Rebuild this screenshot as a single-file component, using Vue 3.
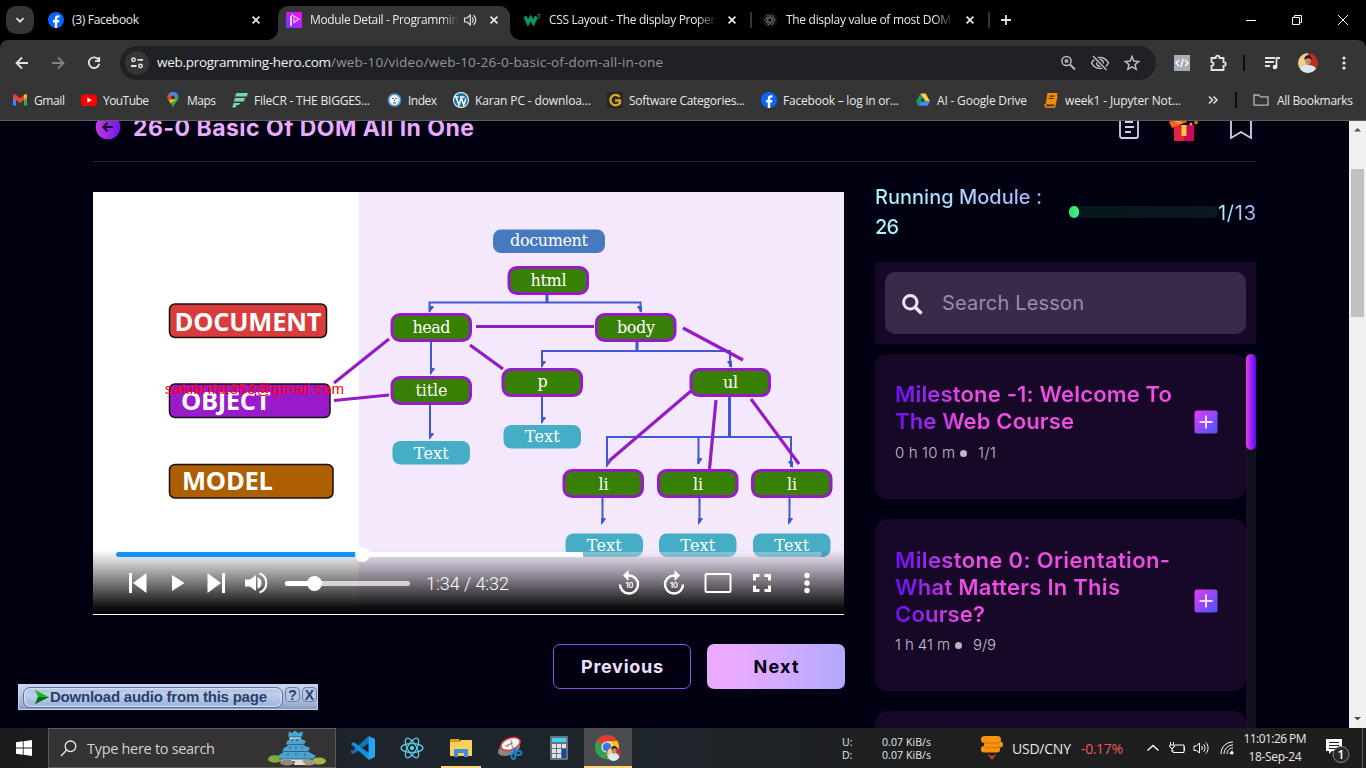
<script setup>
// Sets letter spacing so that a label occupies an exact advance width.
const vFit = {
  mounted(el, { value }) {
    const n = Math.max(1, el.textContent.length - 1)
    const natural = el.getBoundingClientRect().width
    el.style.letterSpacing = (value - natural) / n + 'px'
    el.style.width = value + 'px'
  }
}

const tabs = [
  { icon: 'fb', title: '(3) Facebook', w: 67 },
  { icon: 'ph', title: 'Module Detail - Programming', w: 155, active: true, audio: true },
  { icon: 'w3', title: 'CSS Layout - The display Property', w: 176, sep: true },
  { icon: 'gpt', title: 'The display value of most DOM el', w: 177, sep: true }
]

const marks = [
  { icon: 'gmail', label: 'Gmail', w: 31 },
  { icon: 'yt', label: 'YouTube', w: 46 },
  { icon: 'maps', label: 'Maps', w: 29 },
  { icon: 'filecr', label: 'FileCR - THE BIGGES...', w: 116 },
  { icon: 'index', label: 'Index', w: 29 },
  { icon: 'wp', label: 'Karan PC - downloa...', w: 116 },
  { icon: 'g', label: 'Software Categories...', w: 116 },
  { icon: 'fb', label: 'Facebook – log in or...', w: 116 },
  { icon: 'drive', label: 'AI - Google Drive', w: 90 },
  { icon: 'jup', label: 'week1 - Jupyter Not...', w: 116 }
]

const boxes = [
  { x: 169.5, y: 304, w: 157, fill: '#d93c3c', t: 'DOCUMENT', tx: 174.5, tw: 147, ty: 330.5 },
  { x: 169.5, y: 384, w: 160.5, fill: '#991bc9', t: 'OBJECT', tx: 181, tw: 89.5, ty: 409.5 },
  { x: 169.5, y: 464.5, w: 163.5, fill: '#ad5f00', t: 'MODEL', tx: 182, tw: 91, ty: 489.5 }
]
const elements = [
  { t: 'html', x: 507.5, y: 266, b: 286, w: 36 },
  { t: 'head', x: 390.5, y: 313, b: 333, w: 38 },
  { t: 'body', x: 595, y: 313, b: 333, w: 38 },
  { t: 'title', x: 390.5, y: 376, b: 396, w: 32 },
  { t: 'p', x: 501.5, y: 368, b: 387, w: 10 },
  { t: 'ul', x: 689.5, y: 368, b: 388, w: 15 },
  { t: 'li', x: 562.5, y: 469, b: 490, w: 10 },
  { t: 'li', x: 657, y: 469, b: 490, w: 10 },
  { t: 'li', x: 751, y: 469, b: 490, w: 10 }
]
const leaves = [
  { x: 392.5, y: 441, b: 458.5 },
  { x: 503.5, y: 425, b: 441.5 },
  { x: 565.5, y: 533.5, b: 551 },
  { x: 659, y: 533.5, b: 551 },
  { x: 753, y: 533.5, b: 551 }
]
// Arrow tips: x, y and the side on which the barb sits.
const tips = [
  [430, 313, 1], [641, 313, -1], [431, 375, 1], [430, 440, 1], [542, 368, 1], [731, 368, -1], [542, 424, 1],
  [607, 468, 1], [698.5, 465, 1], [792, 468, -1], [602, 525, 1], [699, 525, 1], [789, 525, 1]
]
const strokes = [
  [334, 383, 389, 339], [334, 400.5, 389, 395], [476, 326.5, 594, 326.5], [470, 345, 503, 369],
  [683, 328, 743, 360], [691, 391, 609, 461], [716, 400, 709.5, 469], [751, 399, 799, 464]
]

const lessons = [
  { lines: [['Milestone -1: Welcome To', 277], ['The Web Course', 179]], time: '0 h 10 m', tw: 60, count: '1/1', cw: 18 },
  { lines: [['Milestone 0: Orientation-', 275], ['What Matters In This', 225], ['Course?', 90]], time: '1 h 41 m', tw: 55, count: '9/9', cw: 23 }
]
</script>

<template>
  <div class="screen">
    <!-- tab strip -->
    <div class="strip">
      <div class="tabsearch"><svg width="10" height="10" viewBox="0 0 10 10"><path d="M1.5 3.2 5 6.7 8.5 3.2" class="ln w2" /></svg></div>
      <template v-for="t in tabs" :key="t.title">
        <div class="tab" :class="{ active: t.active }">
          <svg v-if="t.icon === 'fb'" width="16" height="16" viewBox="0 0 16 16"><circle cx="8" cy="8" r="8" fill="#0866ff" /><path d="M6.800 16V10.400H5V8h1.800V6.700c0-2.300 1.100-3.500 3.300-3.500.5 0 1 .1 1.400.2v2.100h-1c-1 0-1.300.5-1.300 1.200V8h2.200l-.4 2.400H9.200V16z" fill="#fff" /></svg>
          <svg v-else-if="t.icon === 'ph'" width="16" height="16" viewBox="0 0 16 16"><defs><linearGradient id="phg" x1="1" y1="0" x2="0" y2="1"><stop offset="0" stop-color="#ff05e8" /><stop offset="1" stop-color="#6a3dff" /></linearGradient></defs><rect width="16" height="16" fill="url(#phg)" /><path d="M5 4v10" stroke="#f9d8ff" stroke-width="1.800" /><path d="M5 2.500 13 7l-5 3.500V6" stroke="#eba8ff" stroke-width="1.500" fill="none" /></svg>
          <svg v-else-if="t.icon === 'w3'" width="17" height="16" viewBox="0 0 17 16"><path d="M1 4.500 4 11 6.700 6 9.500 11l2.800-6.500" stroke="#059862" stroke-width="3.400" fill="none" /><path d="M13.500 2.500H16L14.500 4.500c2 0 2 2.500-.8 2.200" stroke="#0a8f60" stroke-width="1" fill="none" /></svg>
          <svg v-else width="16" height="16" viewBox="0 0 16 16"><circle cx="8" cy="8" r="7.500" fill="#131313" /><g fill="none" stroke="#777" stroke-width="1.100" stroke-dasharray="1.300 .8"><ellipse cx="8" cy="8" rx="5" ry="2.200" /><ellipse cx="8" cy="8" rx="5" ry="2.200" transform="rotate(60 8 8)" /><ellipse cx="8" cy="8" rx="5" ry="2.200" transform="rotate(120 8 8)" /></g></svg>
          <div class="tabtext" :class="{ fade: t.w > 100, short: t.audio }"><span v-fit="t.w">{{ t.title }}</span></div>
          <svg v-if="t.audio" class="aud" width="14" height="14" viewBox="0 0 14 14"><path d="M1.500 5H4l3.300-3v10L4 9H1.500z" class="ln" /><path d="M9 4.500c1.600 1.200 1.600 3.800 0 5M10.400 2.200c3.200 2.200 3.200 7.400 0 9.600" class="ln" /></svg>
          <svg class="close" width="16" height="16" viewBox="0 0 16 16"><path d="m4.600 4.600 6.800 6.800m0-6.800-6.800 6.800" class="ln w2" /></svg>
        </div>
        <i v-if="t.sep" class="tabsep"></i>
      </template>
      <svg class="plus" width="12" height="12" viewBox="0 0 12 12"><path d="M6 1v10M1 6h10" class="ln w2" /></svg>
      <div class="win">
        <svg width="12" height="12" viewBox="0 0 12 12"><path d="M1 6.500h10" class="ln thin" /></svg>
        <svg width="12" height="12" viewBox="0 0 12 12"><path d="M1.500 3.500h7v7h-7zM3.500 3.500v-2h7v7h-2" class="ln thin" /></svg>
        <svg width="12" height="12" viewBox="0 0 12 12"><path d="m1 1 10 10m0-10L1 11" class="ln thin" /></svg>
      </div>
    </div>

    <!-- toolbar -->
    <div class="toolbar">
      <svg width="16" height="16" viewBox="0 0 16 16"><path d="M14 8H3M8 2.500 2.500 8 8 13.500" class="ln w2" /></svg>
      <svg class="dim" width="16" height="16" viewBox="0 0 16 16"><path d="M2 8h11M8 2.500 13.500 8 8 13.500" class="ln w2" /></svg>
      <svg width="16" height="16" viewBox="0 0 16 16"><path d="M12.700 5A5.300 5.300 0 1 0 13.300 8.800M13.200 2v4.200H9" class="ln w2" /></svg>
      <div class="omni">
        <div class="tune"><svg width="14" height="14" viewBox="0 0 14 14"><circle cx="3.500" cy="3.800" r="1.700" class="ln w15" /><path d="M7.500 3.800H13M1 10h5.500" class="ln w2" /><circle cx="10.500" cy="10" r="1.700" class="ln w15" /></svg></div>
        <span v-fit="174" class="host">web.programming-hero.com</span><span v-fit="332" class="path">/web-10/video/web-10-26-0-basic-of-dom-all-in-one</span>
        <div class="omniicons">
          <svg width="16" height="16" viewBox="0 0 16 16"><circle cx="6.500" cy="6" r="4.600" class="ln w15" /><circle cx="6.500" cy="6" r="2" fill="#c7c7c7" /><path d="m10 9.500 5 5" class="ln w2" /></svg>
          <svg width="20" height="16" viewBox="0 0 20 16"><path d="M1.500 8C4 3.500 7 2.500 10 2.500S16 3.500 18.500 8C16 12.500 13 13.500 10 13.500S4 12.500 1.500 8z" class="ln w15" /><circle cx="10" cy="8" r="3.200" class="ln w15" /><path d="m3.500 1 13 14" stroke="#202124" stroke-width="4" /><path d="m3 1 13.500 14" class="ln w15" /></svg>
          <svg width="16" height="16" viewBox="0 0 16 16"><path d="m8 1.600 1.800 4.500 4.900.4-3.700 3.100 1.200 4.700L8 11.800l-4.200 2.500L5 9.600 1.300 6.500l4.900-.4z" class="ln w15" /></svg>
        </div>
      </div>
      <svg class="ext" width="16" height="16" viewBox="0 0 16 16"><rect width="16" height="16" fill="#a6adba" /><path d="M5 5 2 8l3 3M11 5l3 3-3 3M9.200 4 6.800 12" stroke="#fff" stroke-width="1.300" fill="none" /></svg>
      <svg class="puz" width="18" height="18" viewBox="0 0 18 18"><path d="M2.500 4h4.200c0-3.200 3.800-3.200 3.800 0h4v4.200c3 0 3 3.600 0 3.600V16h-12v-4.200c2.800 0 2.800-3.600 0-3.600z" class="ln w2" /></svg>
      <i class="bar"></i>
      <svg class="music" width="17" height="14" viewBox="0 0 17 14"><path d="M1 2h10M1 6h9M1 10h5M12.500 11V2H16" class="ln w2" /><circle cx="11" cy="11" r="2.300" fill="#eee" /></svg>
      <svg class="ava" width="20" height="20" viewBox="0 0 20 20"><clipPath id="avc"><circle cx="10" cy="10" r="10" /></clipPath><g clip-path="url(#avc)"><path fill="#f2cf8d" d="M0 0h10v20H0z" /><path fill="#c02a20" d="M10 0h10v20H10z" /><path d="M2 20c0-6 3-8 8-8s9 2 9 8z" fill="#d5eaf0" /><ellipse cx="10" cy="7.500" rx="2.800" ry="4.200" fill="#c18b6b" /><path d="M6.500 7c-1-6.500 8-6.500 7 0-2-2.500-4.500-2.500-7 0z" fill="#251a18" /></g></svg>
      <svg class="dots" width="4" height="16" viewBox="0 0 4 16"><g fill="#eee"><circle cx="2" cy="3" r="1.600" /><circle cx="2" cy="8" r="1.600" /><circle cx="2" cy="13" r="1.600" /></g></svg>
    </div>

    <!-- bookmarks -->
    <div class="marks">
      <div v-for="m in marks" :key="m.label" class="mark">
        <svg width="16" height="16" viewBox="0 0 16 16">
          <g v-if="m.icon === 'gmail'"><path d="M1 3.500V13.500h3V6z" fill="#4285f4" /><path d="M15 3.500V13.500h-3V6z" fill="#34a853" /><path d="M1 3.500C1 2 3 2 4 3l4 3.200L12 3c1-1 3-1 3 .5v2.200L8 11 1 5.700z" fill="#ea4335" /><path d="M12 3c1-1 3-1 3 .5v2.200l-3 2.200z" fill="#fbbc04" /></g>
          <g v-else-if="m.icon === 'yt'"><rect y="2.500" width="16" height="11.500" rx="3" fill="#f00" /><path d="m6.400 5.600 4.400 2.600-4.400 2.600z" fill="#fff" /></g>
          <g v-else-if="m.icon === 'maps'"><path d="M8 0a5.500 5.500 0 0 0-5.500 5.500C2.500 9 7 11 8 16c1-5 5.500-7 5.500-10.500A5.500 5.500 0 0 0 8 0z" fill="#34a853" /><path d="M8 0a5.500 5.500 0 0 1 5 3.200L7 10 2.500 5.500A5.500 5.500 0 0 1 8 0z" fill="#4285f4" /><path d="M4 2 8 5 4 9C2 6.500 2 4 4 2z" fill="#ea4335" /><path d="m4 9 4-4 3 3-5.500 3z" fill="#fbbc04" /><circle cx="8" cy="5.500" r="2" fill="#3a3a3a" /></g>
          <g v-else-if="m.icon === 'filecr'" fill="#72d8b0"><path d="M4.500 1H16l-1.200 3.500H3z" /><path d="M3 6h10l-1.200 3.500H1.700z" /><path d="M1.700 11H8l-1 2H4.500L3.800 15.500H.2z" /></g>
          <g v-else-if="m.icon === 'index'"><circle cx="8.500" cy="8" r="7" fill="#3a83b4" /><circle cx="8.500" cy="8" r="5.600" fill="#b9dcf0" /><ellipse cx="8.500" cy="8" rx="3.800" ry="4.800" fill="#fff" /><path d="M6 6.500h1.800M9.300 6.500h1.700M8.500 7.500v2M7 11h3" stroke="#555" /></g>
          <g v-else-if="m.icon === 'wp'"><circle cx="8" cy="8" r="8" fill="#fff" /><circle cx="8" cy="8" r="7" fill="#1d769b" /><path d="M1.500 5h4M7 5h4.500M3 5l3 8 2.300-7M8 5l2.700 8L13 6.500" stroke="#fff" stroke-width="1.500" fill="none" /></g>
          <g v-else-if="m.icon === 'g'"><rect width="16" height="16" fill="#292522" /><path d="M12.800 5A5.200 5.200 0 1 0 13 10.800V8.500H8" stroke="#d9a823" stroke-width="2.400" fill="none" /></g>
          <g v-else-if="m.icon === 'fb'"><circle cx="8" cy="8" r="8" fill="#0866ff" /><path d="M6.800 16V10.400H5V8h1.800V6.700c0-2.300 1.100-3.500 3.300-3.500.5 0 1 .1 1.400.2v2.100h-1c-1 0-1.300.5-1.300 1.200V8h2.200l-.4 2.400H9.200V16z" fill="#fff" /></g>
          <g v-else-if="m.icon === 'drive'"><path d="M5.500 1.500 1 9.500l2.300 4.200L8 5.500z" fill="#16a05d" /><path d="M5.500 1.500h5L15 9.500h-4.600z" fill="#ffcf48" /><path d="M5.700 9.500H15l-2.400 4.200H3.300z" fill="#4688f4" /></g>
          <g v-else><path d="M4.500 1H14.500l-2.400 11.500H2.500z" fill="#f58a07" /><path d="M2 12c0 3 1 3 2 3h7.500l2.400-11" stroke="#f58a07" stroke-width="1.500" fill="none" /><path d="M6.200 4.200h5M5.700 6.500h5" stroke="#3b3220" stroke-width="1.200" /></g>
        </svg>
        <span v-fit="m.w">{{ m.label }}</span>
      </div>
      <svg class="more" width="10" height="10" viewBox="0 0 10 10"><path d="m1 1.500 3.500 3.500L1 8.500M5.500 1.500 9 5 5.500 8.500" class="ln w15" /></svg>
      <i class="bar"></i>
      <svg class="folder" width="16" height="12" viewBox="0 0 16 12"><path d="M1 1h5l1.500 1.800H15V11.200H1z" stroke="#b5b5b5" stroke-width="1.300" fill="none" /></svg>
      <span v-fit="76">All Bookmarks</span>
    </div>

    <!-- page -->
    <div class="page">
      <div class="content">
        <div class="head">
          <svg width="26" height="26" viewBox="0 0 26 26"><defs><linearGradient id="bkg"><stop offset="0" stop-color="#c23bdf" /><stop offset="1" stop-color="#7115ec" /></linearGradient></defs><circle cx="13" cy="13" r="12.300" fill="url(#bkg)" /><path d="M18 13H8.500M12.500 8.800 8.300 13l4.200 4.200" stroke="#150a2a" stroke-width="2" fill="none" /></svg>
          <h1 v-fit="341">26-0 Basic Of DOM All In One</h1>
          <div class="headicons">
            <svg width="20" height="26" viewBox="2 0 20 26"><rect x="3" y="2" width="18" height="22" rx="2" class="lav" /><path d="M8 8h8M8 13h9M8 18h6" class="lav" /></svg>
            <svg width="30" height="30" viewBox="0 0 30 30"><path d="M5 13h20v16H5z" fill="#e42243" /><path d="M15 13h10v16H15z" fill="#d0055c" /><path d="M12.500 13h5v11h-5z" fill="#ffc93a" /><path d="m0 10 14-7 4 7L3 16z" fill="#fb641b" /><path d="m6 8 6 3" stroke="#ff9a3c" stroke-width="3" /><circle cx="22" cy="12" r="1.500" fill="#ff9d1c" /><circle cx="27" cy="10.500" r="2" fill="#bd7416" /><circle cx="21" cy="7" r="2" fill="#ffb52e" /></svg>
            <svg width="24" height="26" viewBox="0 0 24 26"><path d="M2 1h20v23l-10-6-10 6z" class="lav" /></svg>
          </div>
        </div>

        <div class="cols">
          <div class="left">
            <div class="video">
              <svg class="diagram" width="751" height="423" viewBox="93 192 751 423">
                <path fill="#fff" d="M93 192h266v423H93z" />
                <path fill="#f4e8fc" d="M359 192h485v423H359z" />
                <g fill="none" stroke="#4059d3" stroke-width="2">
                  <path d="M429.500 312V302.500H640.500V312M542 367V351H730V367M607 466V437H791V467M431 342V374M430 405V438M542 397V423M698.500 437V464M602.500 498V523M699.500 498V523M789.500 498V523" />
                  <path stroke-width="3" d="M547 295V302M637 342V351M729.500 397V437" />
                </g>
                <path v-for="(p, i) in tips" :key="'t' + i" :d="`M${p[0] - p[2]} ${p[1]}v-7h${p[2] * 4}l${p[2]} 1z`" fill="#4059d3" />
                <rect x="493" y="229.500" width="112" height="23.500" rx="8" fill="#457abf" />
                <text x="549" y="246" class="node" textLength="78">document</text>
                <g v-for="(n, i) in elements" :key="'n' + i">
                  <rect :x="n.x + 1.500" :y="n.y + 1.500" width="78.500" height="26" rx="8" fill="#378003" stroke="#951bc7" stroke-width="3" />
                  <text :x="n.x + 41" :y="n.b" class="node" :textLength="n.w">{{ n.t }}</text>
                </g>
                <g v-for="(n, i) in leaves" :key="'l' + i">
                  <rect :x="n.x" :y="n.y" width="77.500" height="23.500" rx="8" fill="#46adc6" />
                  <text :x="n.x + 38.800" :y="n.b" class="node" textLength="35">Text</text>
                </g>
                <g stroke="#951bc7" stroke-width="3.200"><line v-for="(s, i) in strokes" :key="'s' + i" :x1="s[0]" :y1="s[1]" :x2="s[2]" :y2="s[3]" /></g>
                <g v-for="b in boxes" :key="b.t">
                  <rect :x="b.x" :y="b.y" :width="b.w" height="33.500" rx="5.500" :fill="b.fill" stroke="#16110f" stroke-width="1.500" />
                  <text :x="b.tx" :y="b.ty" class="word" :textLength="b.tw">{{ b.t }}</text>
                </g>
                <text x="165" y="394" class="mail" textLength="179">sakibrifat353@gmail.com</text>
              </svg>
              <div class="player">
                <div class="seek"><i class="buf"></i><i class="done"></i><i class="knob"></i></div>
                <div class="controls">
                  <svg width="18" height="22" viewBox="0 0 18 22"><path d="M1.500 1v20" class="wl w3" /><path d="M17.500 1v20L4 11z" class="wf" /></svg>
                  <svg class="m1" width="14" height="18" viewBox="0 0 14 18"><path d="M1 1v16L13.500 9z" class="wf" /></svg>
                  <svg class="m2" width="18" height="22" viewBox="0 0 18 22"><path d="M16.500 1v20" class="wl w3" /><path d="M.5 1v20L14 11z" class="wf" /></svg>
                  <svg class="m3" width="22" height="22" viewBox="0 0 22 22"><path d="M0 7.500h5L11 3v16l-6-4.500H0z" class="wf" /><path d="M13.500 7c2.800 1.500 2.800 6.500 0 8zM14.500 1.500c9 3 9 16 0 19" class="wl" /></svg>
                  <div class="vol"><i></i><b></b></div>
                  <span v-fit="83" class="time">1:34 / 4:32</span>
                  <div class="rc">
                    <svg width="24" height="26" viewBox="0 0 24 26"><path d="M3 14.500a9 9 0 1 0 9-9H9" class="wl w25" /><path d="M11.500 0v11L6 5.500z" class="wf" /><text x="12.500" y="18" class="ten">10</text></svg>
                    <svg width="24" height="26" viewBox="0 0 24 26"><path d="M21 14.500a9 9 0 1 1-9-9h3" class="wl w25" /><path d="M12.500 0v11L18 5.500z" class="wf" /><text x="12" y="18" class="ten">10</text></svg>
                    <svg width="28" height="20" viewBox="0 0 28 20"><rect x="1.500" y="1" width="25" height="18" rx="1.500" class="wl" /></svg>
                    <svg width="20" height="20" viewBox="0 0 20 20"><path d="M2.500 7.500v-5h5M12.500 2.500h5v5M17.500 12.500v5h-5M7.500 17.500h-5v-5" class="wl w3" /></svg>
                    <svg width="6" height="22" viewBox="0 0 6 22"><g class="wf"><circle cx="3" cy="3.500" r="2.700" /><circle cx="3" cy="11" r="2.700" /><circle cx="3" cy="18.500" r="2.700" /></g></svg>
                  </div>
                </div>
              </div>
            </div>
            <div class="btns">
              <button class="prev"><span v-fit="82">Previous</span></button>
              <button class="next"><span v-fit="45">Next</span></button>
            </div>
          </div>

          <div class="right">
            <div class="running">
              <div class="rm"><span v-fit="167" class="g1">Running Module :</span><span v-fit="24" class="g2">26</span></div>
              <div class="prog"><i></i></div>
              <span v-fit="38" class="frac">1/13</span>
            </div>
            <div class="search">
              <div class="field">
                <svg width="21" height="21" viewBox="0 0 21 21"><circle cx="8.300" cy="8.300" r="6.700" fill="none" stroke="#f0e2fc" stroke-width="3" /><path d="m13 13 6.500 6.500" stroke="#f0e2fc" stroke-width="3.600" /></svg>
                <span v-fit="142">Search Lesson</span>
              </div>
            </div>
            <div class="listwrap">
              <div class="list">
                <div v-for="l in lessons" :key="l.time" class="card">
                  <div class="cardbody">
                    <div class="ttl"><span v-for="s in l.lines" :key="s[0]" v-fit="s[1]">{{ s[0] }}</span></div>
                    <div class="meta"><span v-fit="l.tw">{{ l.time }}</span><i></i><span v-fit="l.cw">{{ l.count }}</span></div>
                  </div>
                  <svg class="add" width="24" height="24" viewBox="0 0 24 24"><defs><linearGradient id="adg" x1="0" y1="0" x2="1" y2="1"><stop offset="0" stop-color="#e63cf0" /><stop offset="1" stop-color="#4156ff" /></linearGradient></defs><rect x=".5" y=".5" width="23" height="23" rx="2.500" fill="url(#adg)" /><path d="M12 5.500v13M5.500 12h13" stroke="#f3dcff" stroke-width="2" /></svg>
                </div>
                <div class="card"></div>
              </div>
              <div class="track"><i></i></div>
            </div>
          </div>
        </div>
      </div>

      <div class="scroll">
        <svg width="17" height="17" viewBox="0 0 17 17"><path d="M5 10.500h7L8.500 7z" fill="#505050" /></svg>
        <i></i>
        <svg width="17" height="17" viewBox="0 0 17 17"><path d="M5 7h7l-3.500 3.500z" fill="#505050" /></svg>
      </div>

      <div class="dl">
        <div class="dlmain">
          <svg width="16" height="14" viewBox="0 0 16 14"><path d="m1 0 14 7L1 14l3-7z" fill="#15b929" /><path d="m4 7 11 0L1 14z" fill="#086c19" /></svg>
          <span v-fit="217">Download audio from this page</span>
        </div>
        <b>?</b><b>X</b>
      </div>
    </div>

    <!-- taskbar -->
    <div class="task">
      <svg class="start" width="16" height="16" viewBox="0 0 16 16"><path d="M0 2.300 6.800 1.300V7.600H0zM7.600 1.200 16 0v7.600H7.600zM0 8.400h6.800v6.300L0 13.700zM7.600 8.400H16V16l-8.400-1.200z" fill="#fff" /></svg>
      <div class="tsearch">
        <svg width="17" height="17" viewBox="0 0 17 17"><circle cx="10.500" cy="6.300" r="5.300" fill="none" stroke="#e8e8e8" stroke-width="1.300" /><path d="M6.700 10 1 16" stroke="#e8e8e8" stroke-width="1.300" /></svg>
        <span v-fit="128">Type here to search</span>
        <svg class="castle" width="58" height="36" viewBox="0 0 58 36">
          <ellipse cx="7" cy="29" rx="7" ry="3.800" fill="#7fae35" /><ellipse cx="51" cy="31" rx="7" ry="3.500" fill="#a9b545" />
          <path d="M22 5h10l2 8 4 8 5 10H13l5-10 3-8z" fill="#f4eee4" />
          <path d="m34 13 4 8 5 10h-7z" fill="#cfc5bd" />
          <path d="M21 1.500 24 3l3-2.500L30 3l5-1.500L34 7H20zM19 11l5-2.500h8L38 11l-2 3.500H18zM16 18l5-3h14l7 3-2 3.500H14zM11 25l6-4h22l9 5-3 3H11z" fill="#4aa3d3" />
          <path d="M20 7h14M18 14.500h18M14 21.500h26M11 29h34" stroke="#246b97" stroke-width="1.200" />
          <path d="M24 9v2m5-2v2M22 16.500v2m6-2v2m6-2v2M20 23.500v2m8-2v2m9-2v2" stroke="#6c5a52" stroke-width="1.500" />
          <ellipse cx="19" cy="32.500" rx="7" ry="3" fill="#94887d" /><ellipse cx="40" cy="32.500" rx="8" ry="3" fill="#a4978a" /><path d="M27 30h6l5 5H26z" fill="#e9dccb" />
        </svg>
      </div>
      <div class="apps">
        <div><svg width="24" height="24" viewBox="0 0 24 24"><path d="m17.500 0-16 15L0 13.500v3L2.500 18 18 7z" fill="#1273ba" /><path d="m2.500 6 15.500 11v7L0 8z" fill="#1590dd" /><path d="M17.500 0v24L24 21V3z" fill="#25a5f2" /></svg></div>
        <div><svg width="24" height="24" viewBox="0 0 24 24"><g fill="none" stroke="#61cfeb" stroke-width="1.200"><ellipse cx="12" cy="12" rx="11" ry="4.400" /><ellipse cx="12" cy="12" rx="11" ry="4.400" transform="rotate(60 12 12)" /><ellipse cx="12" cy="12" rx="11" ry="4.400" transform="rotate(120 12 12)" /></g><circle cx="12" cy="12" r="2.100" fill="#61dafb" /></svg></div>
        <div class="open"><svg width="22" height="20" viewBox="0 0 22 20"><path d="M0 1h9l1.500 2.500H0z" fill="#e09c0b" /><path d="M0 3.500h10l1-1.500h11v16H0z" fill="#fdd05a" /><path d="M4 11h14v8h-4v-4H8v4H4z" fill="#3d91d8" /></svg></div>
        <div><svg width="24" height="24" viewBox="0 0 24 24"><ellipse cx="11" cy="13" rx="11.500" ry="6" transform="rotate(-20 11 13)" fill="#858585" /><ellipse cx="12.500" cy="8" rx="10" ry="5.800" transform="rotate(-20 12.500 8)" fill="#f5f5f5" stroke="#d83b3b" stroke-width="1.500" /><path d="m7 10 8-3M13 4l2 11M9 11l5-5" stroke="#888" /><g fill="none" stroke="#1683c9" stroke-width="1.800"><ellipse cx="15.500" cy="20" rx="2" ry="3" /><ellipse cx="20.500" cy="17" rx="3" ry="2" /><path d="m15.500 17 1-4 2.500 3" /></g></svg></div>
        <div><svg width="18" height="24" viewBox="0 0 18 24"><rect width="18" height="24" rx="1" fill="#68737d" /><path d="M2 2h14v4H2z" fill="#3fd0f2" /><path d="M2 8h4v4H2zm5 0h4v4H7zm5 0h4v4h-4zM2 13h4v4H2zm5 0h4v4H7zM2 18h4v4H2zm5 0h4v4H7z" fill="#dce3e8" /><path d="M12 13h4v9h-4z" fill="#0b4e9b" /></svg></div>
        <div class="open cur"><svg width="26" height="26" viewBox="0 0 26 26"><circle cx="12" cy="12" r="12" fill="#2fa24f" /><path d="M12 12 1.600 6A12 12 0 0 1 22.400 6z" fill="#e33b2e" /><path d="M12 6h10.400A12 12 0 0 1 12 24l5-9z" fill="#fbc116" /><circle cx="12" cy="12" r="5.600" fill="#fff" /><circle cx="12" cy="12" r="4.500" fill="#3579e6" /><circle cx="18.500" cy="18.500" r="7" fill="#b93125" /><path d="M12 21c0-7 3-9 6-9v12z" fill="#f2cf91" /><path d="M13 23c0-4 3-5 6-5s6 2 5 5c-3 4-8 4-11 0z" fill="#dcebed" /><ellipse cx="19" cy="15.500" rx="2.400" ry="3.200" fill="#bd8768" /><path d="M16.300 15c-.5-5 6-5 5.600-1-2-1-3.600-1-5.600 1z" fill="#241b1a" /></svg></div>
      </div>
      <div class="tray">
        <div class="net"><p><span>U:</span><span v-fit="49">0.07 KiB/s</span></p><p><span>D:</span><span v-fit="49">0.07 KiB/s</span></p></div>
        <svg class="coin" width="22" height="24" viewBox="0 0 22 24"><g fill="#f7930e"><rect x="0" y="0" width="20" height="7" rx="3.500" /><rect x="3" y="5.500" width="19" height="6" rx="3" /><rect x="0" y="10" width="19" height="6.500" rx="3" /></g><path d="M2 6.500c5 1 9 1 17 0M4 11.500c5 .6 9 .4 15-.5" stroke="#c9680a" stroke-width=".8" fill="none" /><path d="m6.500 18 4.500 2 4.500-2-4.500 6z" fill="#d8401d" /></svg>
        <span v-fit="59" class="usd">USD/CNY</span><span v-fit="42" class="pct">-0.17%</span>
        <svg class="t1" width="14" height="14" viewBox="0 0 14 14"><path d="m1.500 9.500 5.500-5 5.500 5" class="wl w13" /></svg>
        <svg class="t2" width="17" height="14" viewBox="0 0 17 14"><path d="M6 4h9v7.500H4V9M15.500 6v3.500M1.500 1v3M4.500 1v3M.8 4h4.500v2L3 7.500.8 6zM3 7v4" class="wl w1" /></svg>
        <svg class="t3" width="17" height="14" viewBox="0 0 17 14"><path d="M1 5h2.500L6.500 2v10L3.500 9.500H1zM8.500 5c1 1 1 3 0 4M10.500 3.300c2 2 2 5.500 0 7.500M12.800 1.500c3 3 3 8 0 11" class="wl w1" /></svg>
        <svg class="t4" width="14" height="14" viewBox="0 0 14 14"><path d="M1 13C1 6 6 1 13 1M4 13c0-5 4-9 9-9M7 13c0-3.500 2.500-6 6-6M10 13c0-1.800 1.200-3 3-3" class="wl w1" /><circle cx="12" cy="12" r="1.500" fill="#fff" /></svg>
        <div class="clock"><span v-fit="63">11:01:26 PM</span><span v-fit="53">18-Sep-24</span></div>
        <svg class="notif" width="26" height="26" viewBox="0 0 26 26"><path d="M1 1h16v12H7l-3 3v-3H1z" fill="#fff" /><path d="M4 4.500h10M4 7.500h10M4 10.500h7" stroke="#222" stroke-width="1.200" /><circle cx="16" cy="16.500" r="8" fill="#292929" stroke="#8b8b8b" /><text x="16" y="21" text-anchor="middle" font-size="12" font-weight="600" fill="#fff">1</text></svg>
        <i class="edge"></i>
      </div>
    </div>
  </div>
</template>

<style>
body { margin: 0; overflow: hidden; background: #010111; }
</style>

<style scoped>
.screen { width: 1366px; height: 768px; overflow: hidden; display: flex; flex-direction: column; font: 12px "Open Sans", "Noto Sans", sans-serif; color: #e9e9e9; background: #000; }
.screen * { box-sizing: border-box; }
svg { flex: none; display: block; overflow: visible; }
span, h1 { display: inline-block; white-space: nowrap; flex: none; }
i, b { display: block; flex: none; }
.ln { fill: none; stroke: #e3e3e3; stroke-width: 1.2; }
.w15 { stroke-width: 1.5; }
.w2 { stroke-width: 1.8; }
.thin { stroke-width: 1; stroke: #fff; }
.wl { fill: none; stroke: #fff; stroke-width: 2; }
.w3 { stroke-width: 3; }
.w25 { stroke-width: 2.5; }
.w13 { stroke-width: 1.3; }
.w1 { stroke-width: 1; }
.wf { fill: #fff; }
.lav { fill: none; stroke: #dcccea; stroke-width: 1.8; }

.strip { height: 40px; flex: none; display: flex; align-items: center; padding-left: 6px; }
.tabsearch { width: 28px; height: 28px; border-radius: 10px; background: #353535; display: grid; place-items: center; }
.tab { position: relative; width: 232px; height: 34px; margin: 6px 0 0 6px; padding: 0 8px 6px; display: flex; align-items: center; flex: none; }
.tab.active { background: #353535; border-radius: 10px 10px 0 0; }
.tab.active::before, .tab.active::after { content: ""; position: absolute; bottom: 0; width: 10px; height: 10px; }
.tab.active::before { left: -10px; background: radial-gradient(circle at 0 0, transparent 9.5px, #353535 10px); }
.tab.active::after { right: -10px; background: radial-gradient(circle at 100% 0, transparent 9.5px, #353535 10px); }
.tabtext { margin-left: 8px; width: 168px; overflow: hidden; height: 18px; line-height: 18px; }
.tabtext.fade { mask-image: linear-gradient(90deg, #000 88%, transparent 100%); }
.tabtext.short { width: 149px; }
.aud { margin-left: 4px; }
.close { margin-left: auto; }
.tabsep { width: 2px; height: 16px; background: #353535; margin: 0 -4px 0 2px; }
.plus { margin-left: 14px; }
.win { margin: 0 17px 0 auto; display: flex; gap: 34px; }

.toolbar { height: 46px; flex: none; display: flex; align-items: center; background: #353535; padding: 0 0 1px 14px; border-radius: 8px 8px 0 0; }
.toolbar > svg:nth-child(2), .toolbar > svg:nth-child(3) { margin-left: 20px; }
.dim { opacity: .45; }
.omni { width: 1036px; height: 34px; border-radius: 17px; background: #202124; margin-left: 18px; display: flex; align-items: center; padding-left: 5px; font-size: 13.5px; }
.omni > span { margin-top: -1px; }
.tune { width: 24px; height: 24px; border-radius: 50%; background: #353535; display: grid; place-items: center; margin-right: 8px; }
.host { color: #f2f2f2; }
.path { color: #93969b; }
.omniicons { margin: 0 16px 0 auto; display: flex; gap: 14px; align-items: center; opacity: .8; }
.ext { margin-left: 18px; }
.puz { margin-left: 19px; }
.bar { width: 2px; height: 16px; background: #0c0c0c; }
.toolbar .bar { margin-left: 16px; }
.music { margin-left: 19px; }
.ava { margin-left: 17px; }
.dots { margin-left: 24px; }

.marks { height: 35px; flex: none; display: flex; align-items: center; background: #353535; padding: 0 0 6px 12px; border-bottom: 1px solid #5f5f5f; }
.mark { display: flex; align-items: center; gap: 6px; margin-right: 16px; flex: none; }
.more { margin-left: 11px; }
.marks .bar { margin-left: 17px; }
.folder { margin: 0 8px 0 16px; }

.page { position: relative; height: 607px; flex: none; overflow: hidden; background: #010111; font-family: Inter, sans-serif; display: flex; justify-content: space-between; }
.content { margin-left: 93px; width: 1163px; }
.head { margin-top: -28px; height: 69px; border-bottom: 1px solid #252332; display: flex; align-items: center; padding-left: 2px; }
h1 { margin: 2px 0 0 12px; font-size: 23px; font-weight: 700; color: #eaaaff; }
.headicons { margin: 0 3px 0 auto; display: flex; gap: 30px; align-items: center; }
.cols { display: flex; gap: 31px; }
.left { width: 751px; margin-top: 30px; }
.video { position: relative; height: 423px; }
.node { font: 16px "DejaVu Serif", serif; fill: #fff; text-anchor: middle; }
.word { font: 700 25.5px "Open Sans", sans-serif; fill: #fff; }
.mail { font: 15px "Liberation Sans", sans-serif; fill: #f00; }
.player { position: absolute; left: 0; right: 0; bottom: 1px; height: 64px; background: linear-gradient(transparent, rgba(0,0,0,.3) 30%, rgba(0,0,0,.92) 88%, #000); }
.seek { position: relative; height: 5px; margin: 2px 22px 0 23px; border-radius: 3px; background: rgba(255,255,255,.32); }
.seek i { position: absolute; left: 0; top: 0; height: 5px; }
.seek .buf { width: 467px; background: #fff; }
.seek .done { width: 244px; background: #0d94fb; border-radius: 3px; }
.seek .knob { left: 239px; top: -5px; width: 15px; height: 15px; border-radius: 50%; background: #fff; }
.controls { display: flex; align-items: center; height: 52px; padding-left: 36px; }
.m1 { margin-left: 24px; }
.m2 { margin-left: 22px; }
.m3 { margin-left: 20px; }
.vol { position: relative; margin-left: 18px; width: 125px; height: 5px; border-radius: 3px; background: rgba(255,255,255,.7); }
.vol i { width: 30px; height: 5px; background: #fff; border-radius: 3px; }
.vol b { position: absolute; left: 22px; top: -5px; width: 15px; height: 15px; border-radius: 50%; background: #fff; }
.time { margin-left: 16px; font: 300 18px Roboto, sans-serif; color: #fff; }
.rc { display: flex; align-items: center; margin: 0 34px 0 auto; }
.rc svg:nth-child(2) { margin-left: 21px; }
.rc svg:nth-child(3) { margin-left: 18px; }
.rc svg:nth-child(4) { margin-left: 20px; }
.rc svg:nth-child(5) { margin-left: 32px; }
.ten { font: 600 7.5px Inter, sans-serif; fill: #fff; text-anchor: middle; }
.btns { display: flex; gap: 16px; margin: 29px -1px 0 0; justify-content: flex-end; }
button { width: 138px; height: 45px; border-radius: 7px; padding: 0; font: 700 18px Inter, sans-serif; }
.prev { background: transparent; border: 1px solid #8e50e2; color: #f0e0ff; }
.next { border: 0; background: linear-gradient(90deg, #eaaaff 20%, #b1aaff); color: #04020e; }

.right { width: 381px; margin-top: 20px; }
.running { display: flex; align-items: center; height: 60px; font-size: 20px; font-weight: 500; }
.rm { width: 194px; display: flex; flex-direction: column; line-height: 30px; align-items: flex-start; }
.g1, .g2, .frac { color: transparent; background: linear-gradient(90deg, #a8fdfd, #b1b0ff); background-clip: text; }
.g2 { background: linear-gradient(90deg, #a8fdfd, #aaf0ff); background-clip: text; }
.prog { width: 149px; height: 12px; border-radius: 6px; background: linear-gradient(90deg, #051719, #0b1922); }
.prog i { width: 10px; height: 12px; border-radius: 5px; background: linear-gradient(90deg, #2fdf69, #42f38f); }
.frac { font-weight: 400; margin-top: 1px; }
.search { margin-top: 20px; height: 82px; padding: 10px; background: #170828; }
.field { height: 62px; border-radius: 10px; background: #382a49; display: flex; align-items: center; padding-left: 17px; font-size: 20px; color: #9a8ca9; }
.field span { margin: -1px 0 0 19px; }
.field svg { margin-top: 2px; }
.listwrap { margin-top: 10px; display: flex; height: 374px; overflow: hidden; }
.list { width: 371px; display: flex; flex-direction: column; gap: 20px; }
.card { flex: none; height: 145px; border-radius: 12px; background: #170828; display: flex; justify-content: space-between; padding: 27px 28px 0 20px; }
.card:nth-child(2) { height: 172px; padding-top: 28px; }
.ttl { display: flex; flex-direction: column; align-items: flex-start; width: 290px; font-size: 22px; line-height: 27px; font-weight: 600; color: transparent; background: linear-gradient(90deg, #6c10f8, #8e20ec 25px, #f04de4 70px); background-clip: text; }
.meta { display: flex; align-items: center; font-size: 15px; font-weight: 300; color: #c5bdc8; height: 35px; }
.card:nth-child(2) .meta { margin-top: -1px; }
.meta i { width: 7px; height: 7px; border-radius: 50%; background: #bdb6bf; margin: 2px 11px 0 5px; }
.add { align-self: flex-start; margin: 29px 0 0; }
.card:nth-child(2) .add { margin-top: 42px; }
.track { width: 10px; background: #11111f; }
.track i { height: 96px; border-radius: 5px; background: linear-gradient(90deg, #df40e5, #5908fb); }

.scroll { width: 17px; background: #f1f1f1; }
.scroll i { height: 148px; margin: 31px 2px 393px 2px; background: #c1c1c1; }
.dl { position: absolute; left: 18px; top: 563px; width: 300px; height: 26px; display: flex; align-items: flex-start; padding: 3px 1px 0 4px; gap: 2px; background: linear-gradient(#c9d7ee, #a6b5d3 75%, #8d9cbb); border: 1px solid #c5d2e8; color: #26406f; font: 700 15px/18px "Liberation Sans", sans-serif; }
.dlmain { width: 260px; height: 21px; flex: none; margin-top: -1px; border: 1px solid #5870ac; border-radius: 7px; display: flex; align-items: center; padding: 0 0 1px 10px; background: linear-gradient(#a7bee2, #c2cfe6 35%, #96b0db); box-shadow: inset 0 0 2px 1px #e0e9f6; }
.dlmain span { margin-top: -1px; }
.dl b { width: 15px; height: 15px; margin-top: -1px; border: 1px solid #6b7fae; border-radius: 4px; background: #b4c6e4; font-size: 14px; line-height: 14px; text-align: center; }

.task { height: 40px; flex: none; display: flex; align-items: center; background: linear-gradient(90deg, #1b1c1d, #1f252c 30%, #1f252c 48%, #1e1f20 65%, #1f1e1d); }
.start { margin: 0 16px; }
.tsearch { width: 288px; height: 40px; border: 1px solid #5a5a5a; background: #333; display: flex; align-items: center; padding-left: 11px; font-size: 14.5px; color: #d2d2d2; }
.tsearch span { margin-left: 10px; }
.castle { margin: 0 9px 0 auto; }
.apps { display: flex; margin-left: 3px; height: 40px; gap: 1px; }
.apps div { width: 48px; display: grid; place-items: center; position: relative; }
.apps .open::after { content: ""; position: absolute; bottom: 0; left: 4px; right: 4px; height: 2px; background: #fcd57c; }
.apps .cur { background: #4b4c50; }
.apps .cur::after { left: 0; right: 0; }
.tray { margin-left: auto; display: flex; align-items: center; height: 40px; }
.net { font-size: 10.5px; line-height: 13px; width: 89px; margin: 1px 50px 0 0; }
.net p { margin: 0; display: flex; justify-content: space-between; }
.usd { margin-left: 9px; font-size: 14px; }
.pct { margin-left: 10px; font-size: 14px; color: #ee5a5a; }
.t1 { margin-left: 23px; }
.t2 { margin-left: 9px; }
.t3 { margin-left: 7px; }
.t4 { margin-left: 10px; }
.clock { width: 66px; margin-left: 8px; display: flex; flex-direction: column; align-items: center; line-height: 18px; }
.notif { margin: 6px 0 0 17px; }
.edge { width: 1px; height: 40px; background: #5d5d5d; margin: 0 3px 0 11px; }
</style>
